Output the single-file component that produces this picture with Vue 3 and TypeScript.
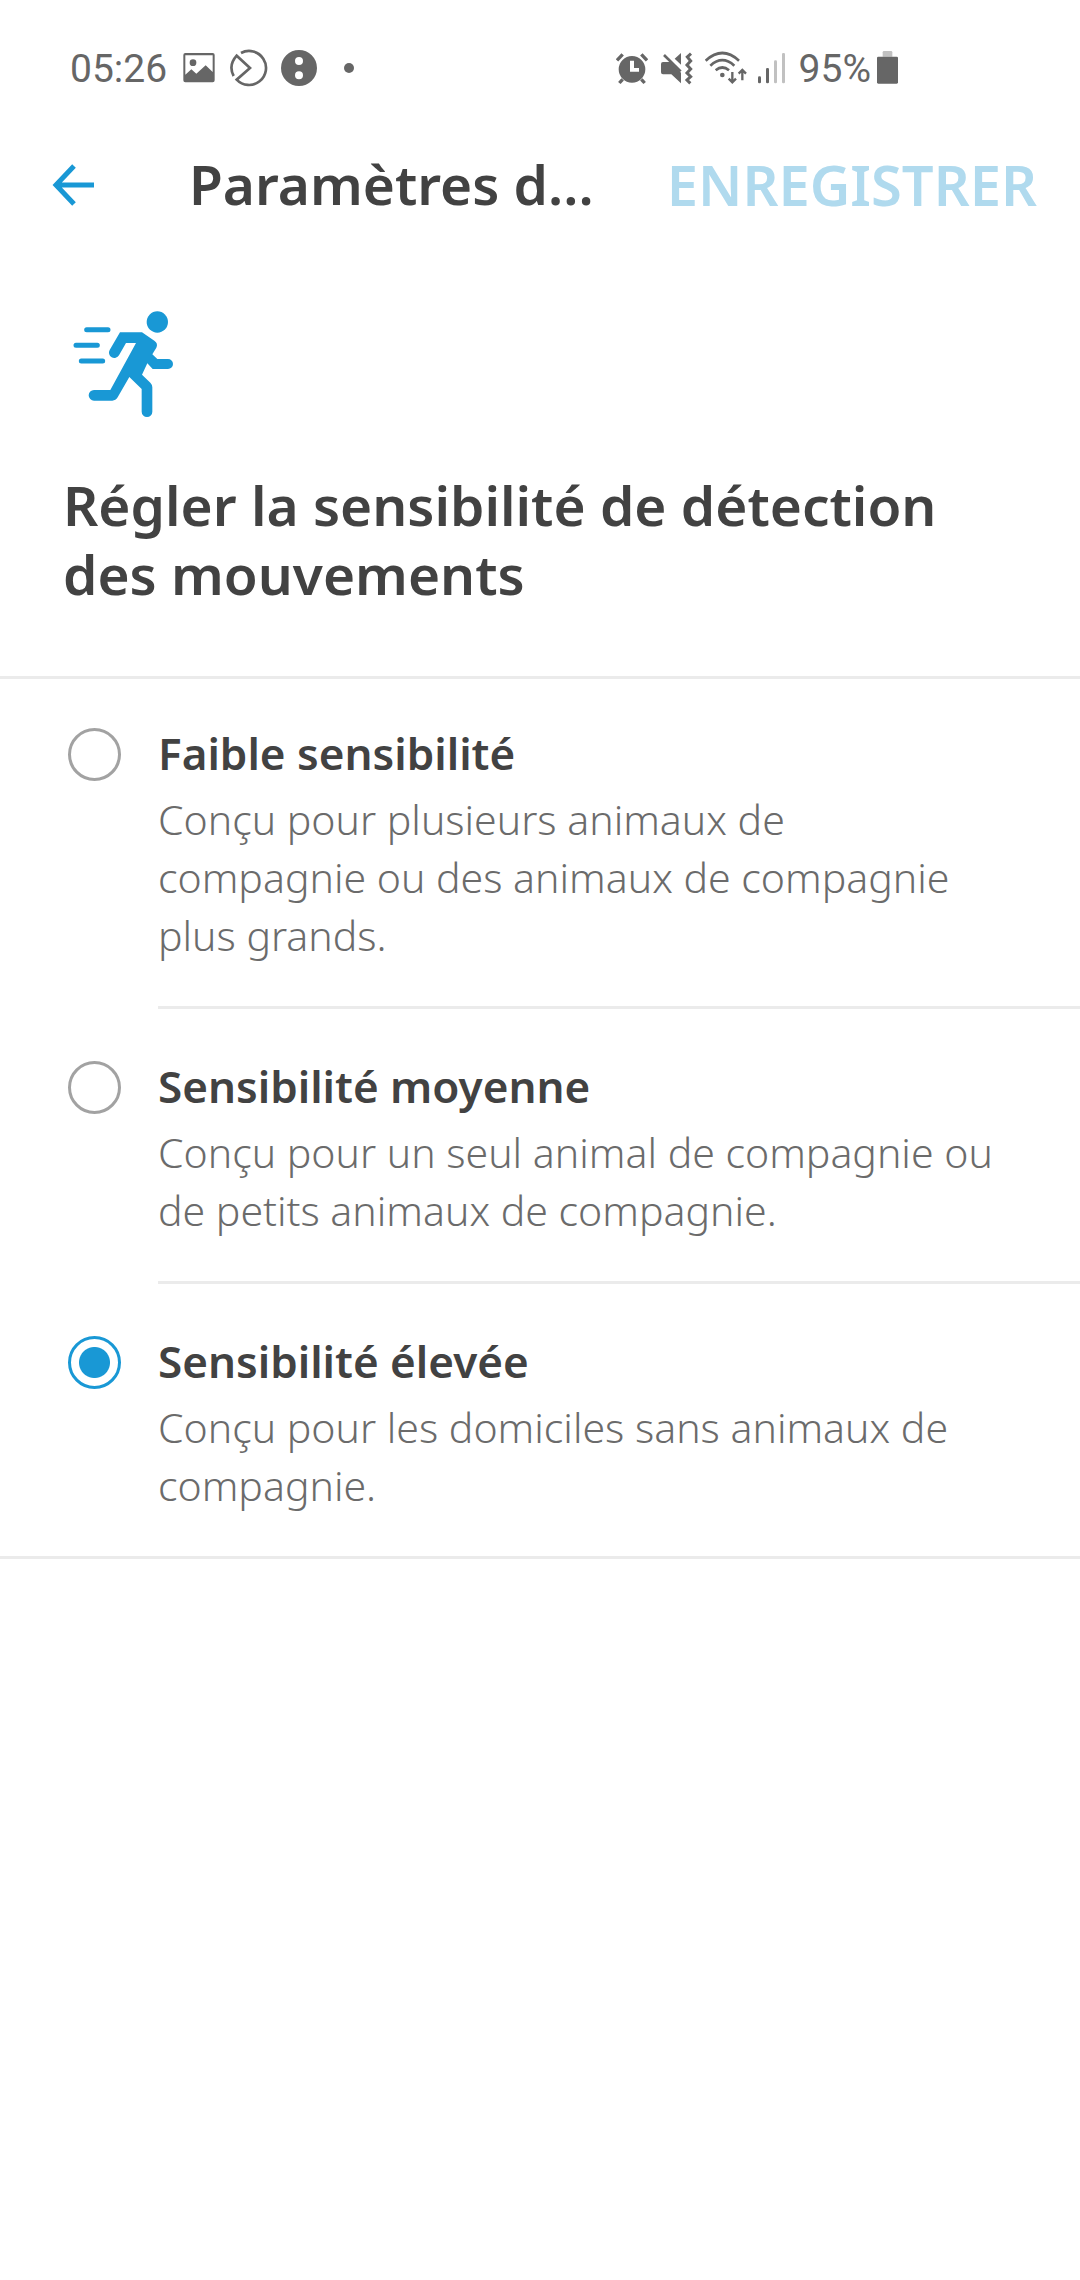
<script setup lang="ts">
import { ref } from 'vue'

interface SensitivityOption {
  id: string
  title: string
  lines: string[]
}

const options: SensitivityOption[] = [
  {
    id: 'low',
    title: 'Faible sensibilité',
    lines: ['Conçu pour plusieurs animaux de', 'compagnie ou des animaux de compagnie', 'plus grands.'],
  },
  {
    id: 'medium',
    title: 'Sensibilité moyenne',
    lines: ['Conçu pour un seul animal de compagnie ou', 'de petits animaux de compagnie.'],
  },
  {
    id: 'high',
    title: 'Sensibilité élevée',
    lines: ['Conçu pour les domiciles sans animaux de', 'compagnie.'],
  },
]

const initial = 'high'
const selected = ref(initial)
</script>

<template>
  <div class="screen">
    <div class="status">
      <div class="status-group">
        <span class="status-text clock">05:26</span>
        <svg class="i-image" width="33" height="38" viewBox="396 57 99 114" aria-hidden="true">
          <path fill-rule="evenodd" d="M406 69H488Q494 69 494 75V151Q494 157 488 157H406Q400 157 400 151V75Q400 69 406 69ZM406 76V134L424 118L439 131L467 106L488 126V76Z" />
          <circle cx="429" cy="98" r="10" />
        </svg>
        <svg class="i-app" width="38" height="38" viewBox="540 57 114 114" aria-hidden="true">
          <g class="line" stroke-width="8">
            <path d="M573 69A51 51 0 1 1 560 149L600 114L560 77Q534 106 551 138" />
          </g>
        </svg>
        <svg class="i-dots" width="36" height="38" viewBox="693 57 108 114" aria-hidden="true">
          <path fill-rule="evenodd" d="M693 114a54 54 0 1 0 108 0a54 54 0 1 0 -108 0ZM735 93a12 12 0 1 0 24 0a12 12 0 1 0 -24 0ZM735 136a12 12 0 1 0 24 0a12 12 0 1 0 -24 0Z" />
        </svg>
        <svg width="10" height="38" viewBox="882 57 30 114" aria-hidden="true">
          <circle cx="897" cy="114" r="15" />
        </svg>
      </div>
      <div class="status-group">
        <svg class="i-alarm" width="32" height="38" viewBox="48 57 96 114" aria-hidden="true">
          <path fill-rule="evenodd" d="M56 118a40 40 0 1 0 80 0a40 40 0 1 0 -80 0ZM90 92H102V114H117V125H90Z" />
          <path class="line" stroke-width="10" d="M51 91L68 73M124 73L141 91M68 148L58 159M124 148L134 159" />
        </svg>
        <svg class="i-mute" width="32" height="38" viewBox="183 57 96 114" aria-hidden="true">
          <path d="M189 96H211L243 128V160L214 133H189Q183 133 183 127V102Q183 96 189 96ZM224 86L243 69V104Z" />
          <path class="line" stroke-width="8" d="M192 75L242 124" />
          <path class="line" stroke-width="9" d="M273 71L262 81L272 93L261 105L272 117L261 129L272 140L261 150L271 160" />
        </svg>
        <svg class="i-wifi" width="42" height="38" viewBox="315 57 126 114" aria-hidden="true">
          <path class="line" stroke-width="8" d="M317 92Q367 46 417 92M331 107Q367 74 403 107M347 121Q367 104 387 121" />
          <circle cx="367" cy="135" r="7" />
          <path class="line" stroke-width="7" d="M397 126V154M386 146L397 157L408 146M427 151V121M416 131L427 120L438 131" />
        </svg>
        <svg class="i-signal" width="29" height="38" viewBox="471 57 87 114" aria-hidden="true">
          <rect x="474" y="139" width="9" height="21" rx="4" />
          <rect x="498" y="114" width="9" height="46" rx="4" />
          <rect class="faint" x="522" y="91" width="9" height="69" rx="4" />
          <rect class="faint" x="546" y="69" width="9" height="91" rx="4" />
        </svg>
        <span class="status-text percent">95%</span>
        <svg width="21" height="38" viewBox="831 57 63 114" aria-hidden="true">
          <path class="faint" d="M848 80V67Q848 63 852 63H873Q877 63 877 67V80Z" />
          <rect x="831" y="80" width="63" height="81" rx="4" />
        </svg>
      </div>
    </div>

    <header class="bar">
      <button class="back" type="button" aria-label="Retour">
        <svg width="42" height="42" viewBox="0 0 42 42" aria-hidden="true">
          <path d="M42 21H4M22 2L4 21L22 40" />
        </svg>
      </button>
      <h1 class="bar-title">Paramètres d...</h1>
      <button class="save" type="button" :disabled="selected === initial">ENREGISTRER</button>
    </header>

    <main>
      <section class="intro">
        <svg class="runner" width="101" height="106" viewBox="69 63 303 318" aria-hidden="true">
          <circle cx="322" cy="96" r="32" />
          <path d="M210 127H276L313 152Q325 160 319 173L307 193L322 207H354A15 15 0 0 1 354 237H308L292 220L276 254L301 278Q307 284 307 292V365A16 16 0 0 1 275 365V297L238 261L203 322Q197 332 187 332H132A16 16 0 0 1 132 300H181L258 159H228L207 196A16 16 0 0 1 179 180Z" />
          <path class="speed" d="M110 119H174M78 166H142M94 213H158" />
        </svg>
        <h2 id="question" class="heading">Régler la sensibilité de détection<br />des mouvements</h2>
      </section>

      <div class="options" role="radiogroup" aria-labelledby="question">
        <label v-for="option in options" :key="option.id" class="option" :for="option.id">
          <input :id="option.id" v-model="selected" class="radio" type="radio" name="sensitivity" :value="option.id" />
          <span class="option-body">
            <span class="option-title">{{ option.title }}</span>
            <span v-for="line in option.lines" :key="line" class="option-line">{{ line }}</span>
          </span>
        </label>
      </div>
    </main>
  </div>
</template>

<style>
body {
  background: #fff;
}
</style>

<style scoped>
.screen {
  min-height: 100vh;
  background: #fff;
  color: #424242;
  font-family: "Noto Sans", "Open Sans", sans-serif;
}

.status {
  display: flex;
  justify-content: space-between;
  align-items: center;
  height: 136px;
  padding: 0 182px 0 70px;
  box-sizing: border-box;
}

.status-group {
  display: flex;
  align-items: center;
  fill: #666;
}

.status-text {
  padding-top: 2px;
  color: #666;
  font-family: Roboto, sans-serif;
  font-size: 39px;
  line-height: 48px;
}

.clock { margin-right: 15px; }
.i-image { margin-right: 15px; }
.i-app { margin-right: 13px; }
.i-dots { margin-right: 27px; }
.i-alarm { margin-right: 13px; }
.i-mute { margin-right: 12px; }
.i-wifi { margin-right: 10px; }
.i-signal { margin-right: 13px; }
.percent { margin-right: 6px; }

.line {
  fill: none;
  stroke: #666;
}

.faint { fill: #c1c1c1; }

.bar {
  display: flex;
  align-items: center;
  height: 98px;
  padding: 0 43px 0 52px;
}

.back,
.save {
  padding: 0;
  border: 0;
  background: none;
  font: inherit;
}

.back {
  display: flex;
  margin-right: 95px;
}

.back path {
  fill: none;
  stroke: #1998d5;
  stroke-width: 5;
}

.bar-title {
  flex: 1;
  margin: 0;
  padding-bottom: 2px;
  font-size: 55px;
  font-weight: 600;
  line-height: 68px;
  white-space: nowrap;
}

.save {
  padding-bottom: 2px;
  color: #1998d5;
  font-size: 56px;
  font-weight: 600;
  line-height: 68px;
}

.save:disabled { color: #b0daee; }

.intro {
  padding: 77px 63px 68px;
}

.runner {
  display: block;
  margin-left: 10px;
  fill: #1998d5;
}

.speed {
  stroke: #1998d5;
  stroke-width: 15;
  stroke-linecap: round;
}

.heading {
  margin: 53px 0 0;
  font-size: 55px;
  font-weight: 600;
  line-height: 69px;
}

.options {
  box-shadow: inset 0 3px #ebebeb;
}

.option {
  display: flex;
  padding-left: 68px;
}

.radio {
  appearance: none;
  flex: none;
  width: 53px;
  height: 53px;
  margin: 52px 37px 0 0;
  border: 3px solid #a2a2a2;
  border-radius: 50%;
}

.radio:checked {
  border-color: #1998d5;
  background: radial-gradient(circle, #1998d5 15px, transparent 16px);
}

.option-body {
  flex: 1;
  padding: 48px 0 42px;
  border-bottom: 3px solid #ebebeb;
}

.option:last-child {
  border-bottom: 3px solid #ebebeb;
}

.option:last-child .option-body {
  border-bottom: 0;
}

.option-title,
.option-line {
  display: block;
}

.option-title {
  margin-bottom: 8px;
  font-size: 44px;
  font-weight: 600;
  line-height: 58px;
}

.option-line {
  color: #6b6b6b;
  font-size: 41px;
  font-weight: 300;
  line-height: 58px;
}
</style>
